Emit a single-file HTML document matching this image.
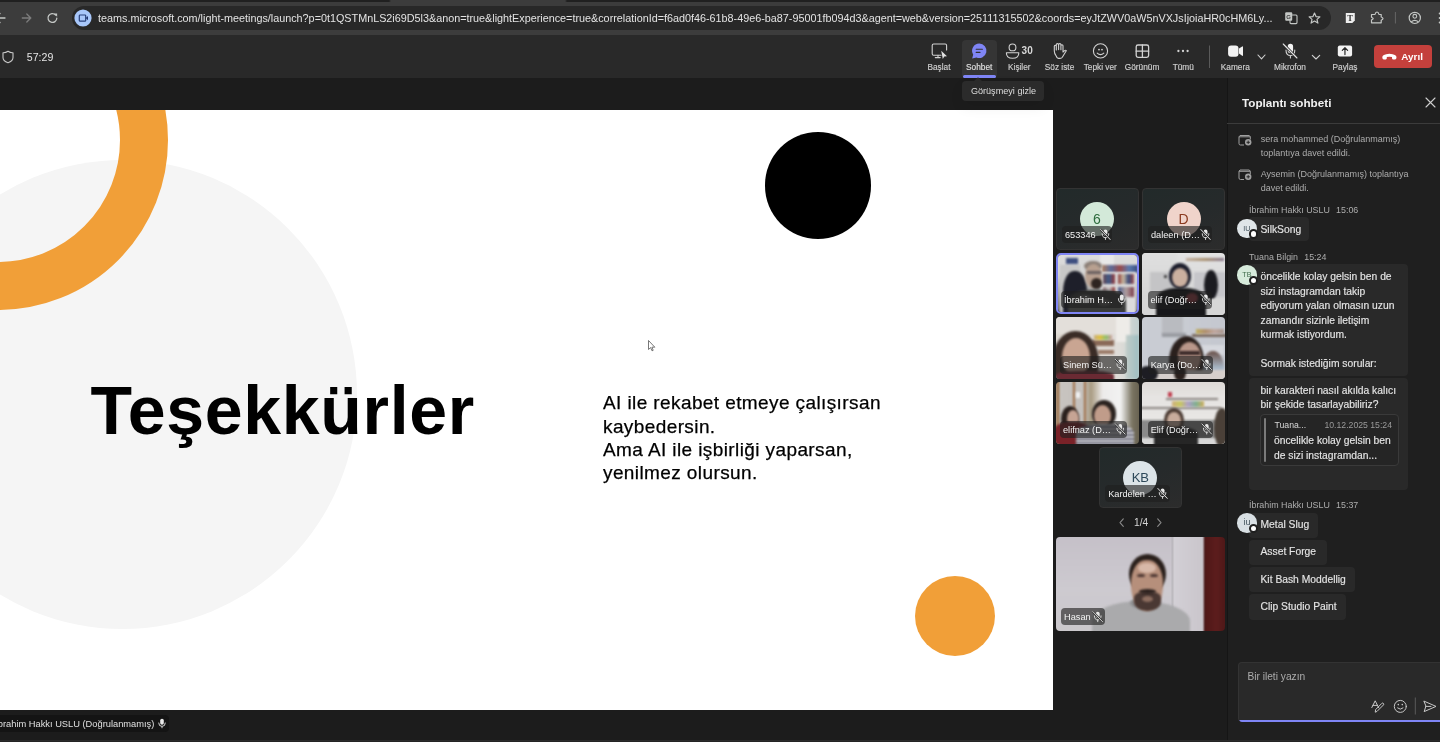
<!DOCTYPE html>
<html><head><meta charset="utf-8">
<style>
*{margin:0;padding:0;box-sizing:border-box}
html,body{width:1440px;height:742px;overflow:hidden;background:#1c1c1c;font-family:"Liberation Sans",sans-serif}
.a{position:absolute}
.t{position:absolute;white-space:nowrap;line-height:1}
svg{position:absolute;overflow:visible}
#tabstrip{left:0;top:0;width:1440px;height:2px;background:linear-gradient(90deg,#202020 0 389px,#3c3c3c 391px 565px,#202020 567px)}
#chrome{left:0;top:0;width:1440px;height:35px;background:#3c3c3c}
#omni{left:72px;top:6px;width:1259px;height:24px;border-radius:12px;background:#282828}
#theader{left:0;top:35px;width:1440px;height:43px;background:#292929}
#main{left:0;top:78px;width:1227px;height:664px;background:#1c1c1c}
#slide{left:0;top:110px;width:1053px;height:600px;background:#fff;overflow:hidden}
#chat{left:1227px;top:78px;width:213px;height:664px;background:#1f1f1f;border-left:1px solid #151515}
.lbl{color:#d0d0d0;font-size:8.3px;-webkit-text-stroke:0.15px #d0d0d0}
</style></head><body><div id="root" style="position:absolute;left:0;top:0;width:1440px;height:742px;will-change:transform">
<!-- BROWSER CHROME -->
<div id="chrome" class="a"></div>
<div id="tabstrip" class="a"></div>
<div id="omni" class="a"></div>
<!-- chrome icons -->
<svg style="left:0;top:0" width="1440" height="36" viewBox="0 0 1440 36">
  <g fill="none" stroke="#c4c7c5" stroke-width="1.3" stroke-linecap="round" stroke-linejoin="round">
    <path d="M5 18 H-4 M0 13.5 L-4.5 18 L0 22.5"/>
  </g>
  <g fill="none" stroke="#7c7c7c" stroke-width="1.3" stroke-linecap="round" stroke-linejoin="round">
    <path d="M22.3 18 H30.6 M26.8 14 L30.8 18 L26.8 22"/>
  </g>
  <g fill="none" stroke="#c4c7c5" stroke-width="1.3" stroke-linecap="round">
    <path d="M56.8 18.2 A4.4 4.4 0 1 1 55.6 15"/>
  </g>
  <path d="M54 13.6 L57.1 13.6 L57.1 16.7 Z" fill="#c4c7c5"/>
  <circle cx="83" cy="18" r="8.6" fill="#a8c7fa"/>
  <rect x="79.3" y="15" width="6.4" height="6.2" rx="0.8" fill="none" stroke="#27407a" stroke-width="1.2"/>
  <path d="M85.8 18.1 L88 16 V20.2 Z" fill="#1f3570"/>
  <!-- translate -->
  <rect x="1285.2" y="12.2" width="7" height="8.6" rx="1" fill="#c4c7c5"/>
  <rect x="1290" y="15" width="7" height="8.6" rx="1" fill="none" stroke="#c4c7c5" stroke-width="1.1"/>
  <text x="1286.3" y="19.3" font-size="6" font-family="Liberation Sans" font-weight="bold" fill="#3c3c3c">G</text>
  <!-- star -->
  <path d="M1314.5 13 L1316 16.6 L1319.9 16.9 L1317 19.4 L1317.9 23.1 L1314.5 21.1 L1311.1 23.1 L1312 19.4 L1309.1 16.9 L1313 16.6 Z" fill="none" stroke="#c4c7c5" stroke-width="1.2" stroke-linejoin="round"/>
  <!-- T ext -->
  <path d="M1345.8 13 H1354.8 V20.5 L1352.3 23 H1345.8 Z" fill="#ededed"/>
  <text x="1347.3" y="21.2" font-size="8.5" font-family="Liberation Serif" font-weight="bold" fill="#333">T</text>
  <!-- puzzle -->
  <path d="M1371.5 14.5 H1375 Q1375.5 12 1377 12 Q1378.5 12 1379 14.5 H1381.2 V17 Q1383 17.6 1383 18.6 Q1383 19.6 1381.2 20.2 V22.8 H1371.5 V20 Q1373.2 19.2 1373.2 18.6 Q1373.2 18 1371.5 17.2 Z" fill="none" stroke="#c4c7c5" stroke-width="1.2" stroke-linejoin="round"/>
  <line x1="1395.4" y1="12" x2="1395.4" y2="23.5" stroke="#666" stroke-width="1"/>
  <!-- profile -->
  <circle cx="1414.8" cy="17.9" r="5.6" fill="none" stroke="#c4c7c5" stroke-width="1.2"/>
  <circle cx="1414.8" cy="16.3" r="1.9" fill="none" stroke="#c4c7c5" stroke-width="1.1"/>
  <path d="M1411.3 21.8 Q1414.8 19 1418.3 21.8" fill="none" stroke="#c4c7c5" stroke-width="1.1"/>
  <circle cx="1439.6" cy="13.5" r="0.9" fill="#c4c7c5"/><circle cx="1439.6" cy="18" r="0.9" fill="#c4c7c5"/><circle cx="1439.6" cy="22.5" r="0.9" fill="#c4c7c5"/>
</svg>

<div class="t" style="left:98px;top:12.9px;font-size:10.8px;color:#e3e3e3">teams.microsoft.com/light-meetings/launch?p=0t1QSTMnLS2i69D5l3&amp;anon=true&amp;lightExperience=true&amp;correlationId=f6ad0f46-61b8-49e6-ba87-95001fb094d3&amp;agent=web&amp;version=25111315502&amp;coords=eyJtZWV0aW5nVXJsIjoiaHR0cHM6Ly...</div>

<!-- TEAMS HEADER -->
<div id="theader" class="a"></div>
<!-- teams header -->
<svg style="left:0;top:35px" width="1440" height="43" viewBox="0 35 1440 43">
  <path d="M8 51.3 Q10.5 53 13 52.8 V57.5 Q13 61 8 62.8 Q3 61 3 57.5 V52.8 Q5.5 53 8 51.3 Z" fill="none" stroke="#c8c8c8" stroke-width="1.1" stroke-linejoin="round"/>
</svg>
<div class="t" style="left:26.8px;top:51.7px;font-size:10.6px;color:#e6e6e6">57:29</div>
<div class="a" style="left:962px;top:39.6px;width:34.6px;height:36px;border-radius:4px 4px 0 0;background:#353535"></div>
<div class="a" style="left:963px;top:75px;width:33px;height:2.5px;border-radius:1.5px;background:#7f85f5"></div>
<svg style="left:0;top:35px" width="1440" height="43" viewBox="0 35 1440 43">
  <g fill="none" stroke="#d2d2d2" stroke-width="1.1" stroke-linecap="round" stroke-linejoin="round">
    <!-- monitor -->
    <path d="M941 55.2 H933.6 Q932.2 55.2 932.2 53.8 V45.4 Q932.2 44 933.6 44 H945.2 Q946.6 44 946.6 45.4 V50"/>
    <path d="M938 55.4 V57.3 M935.3 57.6 H940.2"/>
    <!-- person -->
    <circle cx="1012.5" cy="47.4" r="3.4"/>
    <path d="M1006.4 52.7 H1018.8 Q1019 58.3 1012.6 58.3 Q1006.2 58.3 1006.4 52.7 Z"/>
    <!-- hand -->
    <path d="M1056.2 56 Q1054.3 53.5 1054.3 51 V46.2 Q1054.3 45.2 1055.3 45.2 Q1056.3 45.2 1056.3 46.2 V50 M1056.3 50 V44.6 Q1056.3 43.6 1057.5 43.6 Q1058.6 43.6 1058.6 44.6 V49.6 M1058.6 44.6 Q1058.6 43.6 1059.8 43.6 Q1060.9 43.6 1060.9 44.6 V49.8 M1060.9 45.8 Q1060.9 44.8 1062 44.8 Q1063 44.8 1063 45.8 V52 L1064.6 50.6 Q1065.6 49.9 1066.3 50.7 L1062.3 57.2 Q1061.5 58.4 1060 58.4 H1058.3 Q1057 58.4 1056.2 56"/>
    <!-- smiley -->
    <circle cx="1100.5" cy="50.9" r="7.1"/>
    <path d="M1097.2 53.1 Q1100.5 56.2 1103.8 53.1"/>
    <!-- grid -->
    <rect x="1136.2" y="45" width="12.4" height="12.3" rx="1.8" stroke-width="1.3"/>
    <path d="M1142.4 45 V57.3 M1136.2 51.15 H1148.6" stroke-width="1.3"/>
    <!-- chevrons -->
    <path d="M1258 55 L1261.5 58.8 L1265 55 M1312.3 55.3 L1316 59 L1319.7 55.3"/>
    <!-- mic -->
    <path d="M1286 50 Q1286 55.5 1290.4 55.5 Q1294.8 55.5 1294.8 50 M1290.4 55.5 V58"/>
    <path d="M1283.2 44 L1297 58" stroke="#d2d2d2" stroke-width="1.1"/>
  </g>
  <g fill="#d2d2d2">
    <circle cx="998.8" cy="51" r="0"/>
    <path d="M941.2 50.8 L947 56.2 L944.3 56.6 L942.8 59 Z" fill="#e0e0e0"/>
    <circle cx="1099" cy="49.6" r="0.9"/><circle cx="1102" cy="49.6" r="0.9"/>
    <circle cx="1178.4" cy="51" r="1.15"/><circle cx="1183" cy="51" r="1.15"/><circle cx="1187.6" cy="51" r="1.15"/>
  </g>
  <!-- chat bubble -->
  <path d="M979.3 43.6 A7.2 7.2 0 1 1 976.4 57.4 L972.2 58.6 L973.2 54.6 A7.2 7.2 0 0 1 979.3 43.6 Z" fill="#7f85f5"/>
  <path d="M976.2 49.3 H982.4 M976.2 52.4 H980" stroke="#303030" stroke-width="1.1" stroke-linecap="round"/>
  <line x1="1209.5" y1="45.5" x2="1209.5" y2="68" stroke="#5a5a5a" stroke-width="1"/>
  <!-- camera -->
  <rect x="1228.1" y="45.4" width="10.4" height="11.4" rx="3" fill="#f2f2f2"/>
  <path d="M1239 48.6 L1242.2 46.4 Q1243 46 1243 47 V55.2 Q1243 56.2 1242.2 55.8 L1239 53.6 Z" fill="#f2f2f2"/>
  <!-- mic body -->
  <rect x="1287.7" y="43.8" width="5.4" height="9.4" rx="2.7" fill="#f2f2f2"/>
  <path d="M1283.2 44 L1297 58" stroke="#292929" stroke-width="2.6"/>
  <path d="M1283.2 44 L1297 58" stroke="#e6e6e6" stroke-width="1.1"/>
  <!-- share -->
  <rect x="1337.8" y="45.4" width="14.3" height="11" rx="2" fill="#f2f2f2"/>
  <path d="M1344.95 54.6 V48 M1342.3 50.4 L1344.95 47.7 L1347.6 50.4" fill="none" stroke="#292929" stroke-width="1.2" stroke-linecap="round" stroke-linejoin="round"/>
</svg>
<div class="a" style="left:1373.8px;top:45.1px;width:58.2px;height:23.3px;border-radius:4px;background:#c4403c"></div>
<svg style="left:0;top:35px" width="1440" height="43" viewBox="0 35 1440 43">
  <path d="M1382.3 57.6 Q1382 54.2 1389.4 53.8 Q1396.8 54.2 1396.5 57.6 Q1396.4 59.6 1395 59.6 L1393 59.4 Q1392 59.2 1392 58.2 V57 Q1389.4 56.3 1386.8 57 V58.2 Q1386.8 59.2 1385.8 59.4 L1383.8 59.6 Q1382.4 59.6 1382.3 57.6 Z" fill="#fff"/>
</svg>
<div class="t" style="left:1401.3px;top:52px;font-size:9.9px;font-weight:bold;color:#fff">Ayrıl</div>
<div class="t" style="left:1021.6px;top:46.4px;font-size:10px;font-weight:bold;color:#d8d8d8">30</div>
<div class="t lbl" style="left:909px;width:60px;top:62.8px;text-align:center">Başlat</div>
<div class="t lbl" style="left:949.2px;width:60px;top:62.8px;text-align:center;color:#e8e8e8">Sohbet</div>
<div class="t lbl" style="left:989.3px;width:60px;top:62.8px;text-align:center">Kişiler</div>
<div class="t lbl" style="left:1029.5px;width:60px;top:62.8px;text-align:center">Söz iste</div>
<div class="t lbl" style="left:1070.3px;width:60px;top:62.8px;text-align:center">Tepki ver</div>
<div class="t lbl" style="left:1112px;width:60px;top:62.8px;text-align:center">Görünüm</div>
<div class="t lbl" style="left:1153.3px;width:60px;top:62.8px;text-align:center">Tümü</div>
<div class="t lbl" style="left:1205.3px;width:60px;top:62.8px;text-align:center">Kamera</div>
<div class="t lbl" style="left:1260px;width:60px;top:62.8px;text-align:center">Mikrofon</div>
<div class="t lbl" style="left:1315px;width:60px;top:62.8px;text-align:center">Paylaş</div>
<!-- tooltip -->
<div class="a" style="left:962px;top:81px;width:82px;height:20px;border-radius:4px;background:#2b2b2b;box-shadow:0 6px 14px rgba(0,0,0,0.07);z-index:5"></div>
<svg style="left:972px;top:77px;z-index:5" width="14" height="5" viewBox="0 0 14 5"><path d="M1 5 L6 0.3 L11 5 Z" fill="#2b2b2b"/></svg>
<div class="t" style="left:970.9px;top:86.5px;font-size:9.1px;color:#dedede;z-index:6">Görüşmeyi gizle</div>



<!-- SLIDE -->
<div id="slide" class="a">
  <div class="a" style="left:-112px;top:50px;width:469px;height:469px;border-radius:50%;background:#f5f5f5"></div>
  <div class="a" style="left:-172px;top:-140px;width:340px;height:340px;border-radius:50%;border:48px solid #f19f38"></div>
  <div class="a" style="left:764.9px;top:22.3px;width:106.5px;height:106.5px;border-radius:50%;background:#000"></div>
  <div class="a" style="left:915px;top:466px;width:80px;height:80px;border-radius:50%;background:#f19f38"></div>
  <div class="t" style="left:90.5px;top:265.5px;font-size:68px;font-weight:bold;color:#000;letter-spacing:0.7px">Teşekkürler</div>
  <div class="a" style="left:603px;top:281.3px;font-size:19px;line-height:23.2px;color:#000;letter-spacing:0.4px;-webkit-text-stroke:0.25px #000;white-space:nowrap">AI ile rekabet etmeye çalışırsan<br>kaybedersin.<br>Ama AI ile işbirliği yaparsan,<br>yenilmez olursun.</div>
</div>
<!--SLIDEEXTRA-->

<!-- TILES -->
<style>
.tile{position:absolute;width:83px;height:62px;border-radius:4px;overflow:hidden}
.av{background:linear-gradient(160deg,#222a2a 0%,#262a2b 50%,#2c2c2c 100%);border:1px solid #333}
.b{position:absolute;border-radius:50%}
.tl{position:absolute;height:17.5px;border-radius:4px;background:rgba(30,30,30,0.62);color:#f0f0f0;font-size:9.2px;line-height:17.5px;padding-left:3px;padding-top:1.2px;white-space:nowrap;color:#f4f4f4}
.mic{position:absolute}
.ph>div{filter:blur(1.2px)}
.circ{position:absolute;border-radius:50%;text-align:center;font-family:"Liberation Sans",sans-serif}
</style>
<!-- row 1 -->
<div class="tile av" style="left:1056px;top:188px"></div>
<div class="circ" style="left:1080px;top:201.7px;width:34px;height:34px;background:#d3e9d9;color:#2d6b3d;font-size:14px;line-height:34px">6</div>
<div class="tl" style="left:1062px;top:225.8px;width:50.4px">653346</div>
<div class="tile av" style="left:1142px;top:188px"></div>
<div class="circ" style="left:1166.6px;top:201.7px;width:34px;height:34px;background:#f0d4cb;color:#8b3a1f;font-size:14px;line-height:34px">D</div>
<div class="tl" style="left:1148px;top:225.8px;width:64px">daleen (D…</div>

<!-- row 2: ibrahim -->
<div class="tile ph" style="left:1055.7px;top:252.7px;width:83.2px;height:61.5px;border:2.6px solid #7f85f5;border-radius:5px">
  <div class="a" style="left:-3px;top:-3px;width:86px;height:66px;background:linear-gradient(180deg,#dedede 0%,#d4d4d4 35%,#a0a0a0 65%,#5a5a5a 100%)"></div>
  <div class="a" style="left:42px;top:-3px;width:14px;height:20px;background:#e8e8e8"></div>
  <div class="a" style="left:2px;top:10px;width:20px;height:50px;background:#c8c8c8"></div>
  <div class="a" style="left:8px;top:3px;width:12px;height:6px;background:#3e4f80"></div>
  <div class="a" style="left:44px;top:10px;width:36px;height:8px;background:linear-gradient(90deg,#b08060,#5a6a9a,#9a4a4a,#5a7ab0,#3a4a7a)"></div>
  <div class="a" style="left:42px;top:17px;width:36px;height:42px;background:#dcdcdc"></div>
  <div class="a" style="left:45px;top:19px;width:12px;height:10px;background:linear-gradient(90deg,#6a4a55,#3b5a88,#9b3a3a)"></div>
  <div class="a" style="left:60px;top:19px;width:16px;height:10px;background:linear-gradient(90deg,#8a3a3a,#c9b8a0,#3a4a7a,#a05050)"></div>
  <div class="a" style="left:45px;top:32px;width:12px;height:10px;background:linear-gradient(90deg,#8a6a70,#c9c9c9,#8a2a2a)"></div>
  <div class="a" style="left:60px;top:32px;width:16px;height:10px;background:linear-gradient(90deg,#4a5a8a,#b0a0a0,#7a3a4a)"></div>
  <div class="b" style="left:5px;top:16px;width:24px;height:46px;background:#1e1f2a;border-radius:45% 45% 10% 10%"></div>
  <div class="b" style="left:26px;top:6px;width:18px;height:10px;background:#8c8078"></div>
  <div class="b" style="left:27px;top:9px;width:17px;height:24px;background:#b8a090"></div>
  <div class="a" style="left:29px;top:16px;width:14px;height:3px;background:#6a6060"></div>
  <div class="b" style="left:33px;top:23px;width:11px;height:11px;background:#2e2420"></div>
  <div class="a" style="left:10px;top:35px;width:58px;height:28px;background:#3a3b3a;border-radius:40% 40% 0 0"></div>
  <div class="b" style="left:20px;top:40px;width:14px;height:8px;background:#6a6a68"></div>
  <div class="b" style="left:40px;top:44px;width:12px;height:7px;background:#5a5a58"></div>
</div>
<div class="tl" style="left:1061px;top:290.5px;width:62px">İbrahim H…</div>

<!-- elif -->
<div class="tile ph" style="left:1142px;top:253px">
  <div class="a" style="left:-3px;top:-3px;width:90px;height:70px;background:linear-gradient(180deg,#e4e4e4 0%,#dadada 45%,#d2d2d2 100%)"></div>
  <div class="a" style="left:-3px;top:-3px;width:38px;height:70px;background:linear-gradient(180deg,#e0e0e0,#d0d0d0)"></div>
  <div class="a" style="left:44px;top:5px;width:38px;height:3px;background:linear-gradient(90deg,#c2b0a0,#a89070,#8a7a90)"></div>
  <div class="a" style="left:8px;top:19px;width:22px;height:20px;background:#c4c4c6"></div>
  <div class="b" style="left:22px;top:22px;width:3px;height:3px;background:#222"></div>
  <div class="a" style="left:52px;top:19px;width:32px;height:25px;background:#c6c6ca"></div>
  <div class="b" style="left:62px;top:17px;width:14px;height:30px;background:#1b1b20"></div>
  <div class="a" style="left:-3px;top:46px;width:90px;height:20px;background:#d6d6d6"></div>
  <div class="b" style="left:27px;top:10px;width:22px;height:26px;background:#1c1d2c"></div>
  <div class="b" style="left:30px;top:15px;width:16px;height:19px;background:#cbb0a0"></div>
  <div class="a" style="left:14px;top:35px;width:50px;height:30px;background:#17171a;border-radius:40% 40% 0 0"></div>
  <div class="b" style="left:44px;top:40px;width:12px;height:10px;background:#8a3a40"></div>
</div>
<div class="tl" style="left:1147.5px;top:291px;width:64px">elif (Doğr…</div>

<!-- sinem -->
<div class="tile ph" style="left:1055.6px;top:317.2px">
  <div class="a" style="left:-3px;top:-3px;width:90px;height:70px;background:linear-gradient(90deg,#dcd6cf 0%,#e2ddd7 55%,#dedcd8 75%,#b9cbcc 100%)"></div>
  <div class="a" style="left:-3px;top:-3px;width:70px;height:20px;background:#e3dfda"></div>
  <div class="a" style="left:60px;top:-3px;width:14px;height:28px;background:#eeece8"></div>
  <div class="a" style="left:36px;top:23px;width:22px;height:6px;background:#8a6a58"></div>
  <div class="a" style="left:38px;top:18px;width:18px;height:5px;background:linear-gradient(90deg,#c8b080,#e0c040,#90c070,#d0a0a0)"></div>
  <div class="a" style="left:42px;top:33px;width:16px;height:4px;background:#9a7a68"></div>
  <div class="a" style="left:70px;top:18px;width:13px;height:44px;background:linear-gradient(90deg,#c0ccc8,#9fbfc2)"></div>
  <div class="b" style="left:-4px;top:14px;width:47px;height:62px;background:#3a2c26"></div>
  <div class="b" style="left:6px;top:21px;width:28px;height:38px;background:#c9a592"></div>
  <div class="a" style="left:0;top:54px;width:58px;height:10px;background:#6a2a33;border-radius:40% 40% 0 0"></div>
</div>
<div class="tl" style="left:1060px;top:356px;width:67px">Sinem Sü…</div>

<!-- karya -->
<div class="tile ph" style="left:1142.3px;top:317.2px">
  <div class="a" style="left:-3px;top:-3px;width:90px;height:70px;background:linear-gradient(90deg,#cacdd4 0%,#c9ccd3 40%,#c4c7cf 100%)"></div>
  <div class="a" style="left:20px;top:-3px;width:21px;height:21px;background:#b9bbc0"></div>
  <div class="a" style="left:20px;top:16px;width:24px;height:4px;background:#9a9ca2"></div>
  <div class="a" style="left:50px;top:17px;width:35px;height:3px;background:#7a6a60"></div>
  <div class="a" style="left:54px;top:12px;width:28px;height:5px;background:linear-gradient(90deg,#c0b060,#b09070,#c0a8a0,#a89890)"></div>
  <div class="a" style="left:52px;top:28px;width:30px;height:10px;background:#d6d8de"></div>
  <div class="b" style="left:60px;top:34px;width:22px;height:34px;background:linear-gradient(180deg,#6a5048,#a8b8c8 50%,#d0d0d8)"></div>
  <div class="b" style="left:27px;top:19px;width:35px;height:50px;background:#2a201d"></div>
  <div class="b" style="left:36px;top:25px;width:23px;height:31px;background:#b9978a"></div>
  <div class="a" style="left:37px;top:34px;width:21px;height:4px;background:#3a2a28"></div>
  <div class="a" style="left:10px;top:53px;width:75px;height:12px;background:#d6cfcc"></div>
  <div class="b" style="left:32px;top:48px;width:12px;height:16px;background:#2a201d"></div>
  <div class="b" style="left:-4px;top:49px;width:20px;height:16px;background:#1d1d23"></div>
</div>
<div class="tl" style="left:1147.7px;top:356px;width:65.3px">Karya (Do…</div>

<!-- elifnaz -->
<div class="tile ph" style="left:1055.6px;top:382.2px">
  <div class="a" style="left:-3px;top:-3px;width:90px;height:70px;background:linear-gradient(90deg,#9a7a5a 0%,#c8c4c0 8%,#c4c0bc 35%,#a89a80 42%,#ecebea 55%,#f2f2f2 75%,#7a7462 88%,#5e5848 100%)"></div>
  <div class="a" style="left:1px;top:-3px;width:2.5px;height:70px;background:#9a6a40"></div>
  <div class="a" style="left:17px;top:-3px;width:2.5px;height:45px;background:#a07048"></div>
  <div class="a" style="left:28px;top:-3px;width:2.5px;height:45px;background:#a07048"></div>
  <div class="a" style="left:20px;top:10px;width:4px;height:6px;background:#f2f2f2"></div>
  <div class="b" style="left:5px;top:24px;width:18px;height:26px;background:#2a201d"></div>
  <div class="b" style="left:11px;top:28px;width:12px;height:17px;background:#c6a494"></div>
  <div class="a" style="left:-3px;top:40px;width:38px;height:25px;background:#7a2228;border-radius:40% 40% 0 0"></div>
  <div class="b" style="left:36px;top:18px;width:24px;height:28px;background:#2a221f"></div>
  <div class="b" style="left:38px;top:23px;width:17px;height:22px;background:#c09c8a"></div>
  <div class="a" style="left:20px;top:42px;width:58px;height:22px;background:repeating-linear-gradient(180deg,#d4d4da 0 2px,#6a6a78 2px 4px);border-radius:40% 40% 0 0"></div>
</div>
<div class="tl" style="left:1060px;top:420.5px;width:67px">elifnaz (D…</div>

<!-- Elif -->
<div class="tile ph" style="left:1142.3px;top:382.2px">
  <div class="a" style="left:-3px;top:-3px;width:90px;height:70px;background:linear-gradient(180deg,#dcd8d4 0%,#e6e4e2 25%,#e8e6e4 55%,#c8c6c4 100%)"></div>
  <div class="a" style="left:24px;top:16px;width:52px;height:2px;background:#8a8480"></div>
  <div class="a" style="left:-3px;top:25px;width:82px;height:2px;background:#8a8480"></div>
  <div class="a" style="left:30px;top:19px;width:32px;height:6px;background:linear-gradient(90deg,#d0b080,#c8c860,#b0a0c8,#80b090,#d0b060)"></div>
  <div class="a" style="left:26px;top:10px;width:4px;height:5px;background:#c04050"></div>
  <div class="a" style="left:-3px;top:38px;width:90px;height:20px;background:#8a8a8a"></div>
  <div class="a" style="left:-3px;top:56px;width:90px;height:10px;background:#d8d8d8"></div>
  <div class="b" style="left:22px;top:26px;width:20px;height:24px;background:#4a3a32"></div>
  <div class="b" style="left:25px;top:30px;width:14px;height:17px;background:#c8ac9c"></div>
  <div class="a" style="left:12px;top:45px;width:44px;height:20px;background:#262626;border-radius:40% 40% 0 0"></div>
  <div class="b" style="left:72px;top:26px;width:16px;height:40px;background:#4a4038"></div>
</div>
<div class="tl" style="left:1147.7px;top:420.5px;width:65.3px">Elif (Doğr…</div>

<!-- KB -->
<div class="tile av" style="left:1099px;top:447px;width:82.5px;height:61px"></div>
<div class="circ" style="left:1123.3px;top:460.7px;width:34px;height:34px;background:#dce4e8;color:#2d4859;font-size:13px;line-height:34px">KB</div>
<div class="tl" style="left:1105.2px;top:484.5px;width:64.8px">Kardelen …</div>

<!-- pagination -->
<svg style="left:0;top:0" width="1440" height="742"><path d="M1123.3 518.8 L1120 522.6 L1123.3 526.4 M1157.7 518.8 L1161 522.6 L1157.7 526.4" fill="none" stroke="#8a8a8a" stroke-width="1.1" stroke-linecap="round" stroke-linejoin="round"/></svg>
<div class="t" style="left:1134px;top:518px;font-size:10.2px;color:#d6d6d6">1/4</div>

<!-- hasan -->
<div class="tile ph" style="left:1055.5px;top:537.3px;width:169.6px;height:94.2px">
  <div class="a" style="left:-3px;top:-3px;width:120px;height:100px;background:linear-gradient(180deg,#c5c0c8 0%,#cdcad0 55%,#cbc8cc 100%)"></div>
  <div class="a" style="left:116px;top:-3px;width:33px;height:100px;background:linear-gradient(90deg,#d3d0d6,#c9c5cb)"></div>
  <div class="a" style="left:148.5px;top:-3px;width:25px;height:100px;background:linear-gradient(90deg,#4e1616,#5c1d1d 50%,#481515)"></div>
  <div class="a" style="left:36px;top:64px;width:98px;height:34px;background:#aaaaac;border-radius:50% 50% 0 0/60% 60% 0 0"></div>
  <div class="b" style="left:74px;top:60px;width:30px;height:12px;background:#8f8f91"></div>
  <div class="b" style="left:73px;top:17px;width:37px;height:40px;background:#2a201c"></div>
  <div class="b" style="left:75.5px;top:23px;width:32px;height:51px;background:#b68f7b;border-radius:45% 45% 50% 50%"></div>
  <div class="b" style="left:82px;top:26px;width:18px;height:10px;background:#d7b8a8"></div>
  <div class="b" style="left:78px;top:55px;width:27px;height:19px;background:#4a3833;border-radius:30% 30% 50% 50%"></div>
  <div class="b" style="left:83px;top:52px;width:17px;height:5px;background:#2e2320"></div>
  <div class="b" style="left:86px;top:59px;width:11px;height:6px;background:#8e6e60"></div>
  <div class="b" style="left:81px;top:37px;width:8px;height:3px;background:#4a3530"></div>
  <div class="b" style="left:94px;top:37px;width:8px;height:3px;background:#4a3530"></div>
</div>
<div class="tl" style="left:1061.1px;top:607.7px;width:43.5px">Hasan</div>
<svg style="left:0;top:0" width="1440" height="742"><rect x="1103.55" y="229.50" width="3.8" height="6.2" rx="1.9" fill="#e8e8e8"/><path d="M1102.15 233.70 Q1102.15 237.70 1105.45 237.70 Q1108.75 237.70 1108.75 233.70 M1105.45 237.70 V239.50" fill="none" stroke="#e8e8e8" stroke-width="0.9" stroke-linecap="round"/><path d="M1100.70 229.50 L1110.20 239.50" stroke="#333" stroke-width="2"/><path d="M1100.70 229.50 L1110.20 239.50" stroke="#e8e8e8" stroke-width="0.9" stroke-linecap="round"/><rect x="1203.65" y="229.50" width="3.8" height="6.2" rx="1.9" fill="#e8e8e8"/><path d="M1202.25 233.70 Q1202.25 237.70 1205.55 237.70 Q1208.85 237.70 1208.85 233.70 M1205.55 237.70 V239.50" fill="none" stroke="#e8e8e8" stroke-width="0.9" stroke-linecap="round"/><path d="M1200.80 229.50 L1210.30 239.50" stroke="#333" stroke-width="2"/><path d="M1200.80 229.50 L1210.30 239.50" stroke="#e8e8e8" stroke-width="0.9" stroke-linecap="round"/><rect x="1119.85" y="294.50" width="3.8" height="6.2" rx="1.9" fill="#e8e8e8"/><path d="M1118.45 298.70 Q1118.45 302.70 1121.75 302.70 Q1125.05 302.70 1125.05 298.70 M1121.75 302.70 V304.50" fill="none" stroke="#e8e8e8" stroke-width="0.9" stroke-linecap="round"/><rect x="1203.85" y="294.50" width="3.8" height="6.2" rx="1.9" fill="#e8e8e8"/><path d="M1202.45 298.70 Q1202.45 302.70 1205.75 302.70 Q1209.05 302.70 1209.05 298.70 M1205.75 302.70 V304.50" fill="none" stroke="#e8e8e8" stroke-width="0.9" stroke-linecap="round"/><path d="M1201.00 294.50 L1210.50 304.50" stroke="#333" stroke-width="2"/><path d="M1201.00 294.50 L1210.50 304.50" stroke="#e8e8e8" stroke-width="0.9" stroke-linecap="round"/><rect x="1118.35" y="359.50" width="3.8" height="6.2" rx="1.9" fill="#e8e8e8"/><path d="M1116.95 363.70 Q1116.95 367.70 1120.25 367.70 Q1123.55 367.70 1123.55 363.70 M1120.25 367.70 V369.50" fill="none" stroke="#e8e8e8" stroke-width="0.9" stroke-linecap="round"/><path d="M1115.50 359.50 L1125.00 369.50" stroke="#333" stroke-width="2"/><path d="M1115.50 359.50 L1125.00 369.50" stroke="#e8e8e8" stroke-width="0.9" stroke-linecap="round"/><rect x="1204.85" y="359.50" width="3.8" height="6.2" rx="1.9" fill="#e8e8e8"/><path d="M1203.45 363.70 Q1203.45 367.70 1206.75 367.70 Q1210.05 367.70 1210.05 363.70 M1206.75 367.70 V369.50" fill="none" stroke="#e8e8e8" stroke-width="0.9" stroke-linecap="round"/><path d="M1202.00 359.50 L1211.50 369.50" stroke="#333" stroke-width="2"/><path d="M1202.00 359.50 L1211.50 369.50" stroke="#e8e8e8" stroke-width="0.9" stroke-linecap="round"/><rect x="1118.35" y="424.00" width="3.8" height="6.2" rx="1.9" fill="#e8e8e8"/><path d="M1116.95 428.20 Q1116.95 432.20 1120.25 432.20 Q1123.55 432.20 1123.55 428.20 M1120.25 432.20 V434.00" fill="none" stroke="#e8e8e8" stroke-width="0.9" stroke-linecap="round"/><path d="M1115.50 424.00 L1125.00 434.00" stroke="#333" stroke-width="2"/><path d="M1115.50 424.00 L1125.00 434.00" stroke="#e8e8e8" stroke-width="0.9" stroke-linecap="round"/><rect x="1204.85" y="424.00" width="3.8" height="6.2" rx="1.9" fill="#e8e8e8"/><path d="M1203.45 428.20 Q1203.45 432.20 1206.75 432.20 Q1210.05 432.20 1210.05 428.20 M1206.75 432.20 V434.00" fill="none" stroke="#e8e8e8" stroke-width="0.9" stroke-linecap="round"/><path d="M1202.00 424.00 L1211.50 434.00" stroke="#333" stroke-width="2"/><path d="M1202.00 424.00 L1211.50 434.00" stroke="#e8e8e8" stroke-width="0.9" stroke-linecap="round"/><rect x="1160.65" y="488.40" width="3.8" height="6.2" rx="1.9" fill="#e8e8e8"/><path d="M1159.25 492.60 Q1159.25 496.60 1162.55 496.60 Q1165.85 496.60 1165.85 492.60 M1162.55 496.60 V498.40" fill="none" stroke="#e8e8e8" stroke-width="0.9" stroke-linecap="round"/><path d="M1157.80 488.40 L1167.30 498.40" stroke="#333" stroke-width="2"/><path d="M1157.80 488.40 L1167.30 498.40" stroke="#e8e8e8" stroke-width="0.9" stroke-linecap="round"/><rect x="1095.85" y="611.70" width="3.8" height="6.2" rx="1.9" fill="#e8e8e8"/><path d="M1094.45 615.90 Q1094.45 619.90 1097.75 619.90 Q1101.05 619.90 1101.05 615.90 M1097.75 619.90 V621.70" fill="none" stroke="#e8e8e8" stroke-width="0.9" stroke-linecap="round"/><path d="M1093.00 611.70 L1102.50 621.70" stroke="#333" stroke-width="2"/><path d="M1093.00 611.70 L1102.50 621.70" stroke="#e8e8e8" stroke-width="0.9" stroke-linecap="round"/></svg>
<div class="a" style="left:-10px;top:715px;width:178.8px;height:17px;border-radius:4px;background:#141414"></div>
<div class="t" style="left:-4.8px;top:720.4px;font-size:9.3px;color:#e0e0e0">İbrahim Hakkı USLU (Doğrulanmamış)</div>
<svg style="left:0;top:0" width="1440" height="742"><rect x="160.2" y="718.8" width="3.6" height="6" rx="1.8" fill="#e8e8e8"/><path d="M158.7 722.6 Q158.7 726.4 162 726.4 Q165.3 726.4 165.3 722.6 M162 726.4 V728.2" fill="none" stroke="#e8e8e8" stroke-width="0.9"/></svg>

<svg style="left:0;top:0" width="1440" height="742"><path d="M648.5 340.5 V349.5 L650.6 347.6 L652 350.8 L653.2 350.3 L651.9 347.2 L654.8 347.2 Z" fill="#fff" stroke="#555" stroke-width="0.8" stroke-linejoin="round"/></svg>


<!-- CHAT -->
<div id="chat" class="a"></div>
<style>
.sys{position:absolute;left:1260.7px;font-size:9px;line-height:14.2px;color:#adadad;white-space:nowrap}
.who{position:absolute;left:1249px;font-size:8.9px;line-height:1;color:#adadad;white-space:nowrap}
.bub{position:absolute;left:1249px;background:#292929;border-radius:4px}
.msg{position:absolute;left:1260.5px;font-size:10.3px;color:#e4e4e4;white-space:nowrap;line-height:1;-webkit-text-stroke:0.15px #e4e4e4}
.avt{position:absolute;width:19.5px;height:19.5px;border-radius:50%;text-align:center;font-size:7.2px;line-height:19.5px}
.dot{position:absolute;width:9.4px;height:9.4px;border-radius:50%;background:#fff;border:2px solid #1f1f1f}
</style>
<div class="t" style="left:1242px;top:97.4px;font-size:11.7px;font-weight:bold;color:#f2f2f2">Toplantı sohbeti</div>
<svg style="left:0;top:0" width="1440" height="742"><path d="M1426 98 L1435 107 M1435 98 L1426 107" stroke="#cfcfcf" stroke-width="1.1" stroke-linecap="round"/></svg>
<div class="a" style="left:1227px;top:123px;width:213px;height:1px;background:#3b3b3b"></div>
<svg style="left:0;top:0" width="1440" height="742">
 <g fill="none" stroke="#a0a0a0" stroke-width="1">
  <path d="M1244 145 H1240.5 Q1239 145 1239 143.5 V136.8 H1250.3 V139.5 M1239 136.8 L1240 135.5 H1249.3 L1250.3 136.8"/>
  <path d="M1244 179.5 H1240.5 Q1239 179.5 1239 178 V171.3 H1250.3 V174 M1239 171.3 L1240 170 H1249.3 L1250.3 171.3"/>
 </g>
 <g fill="#a0a0a0"><circle cx="1248.2" cy="142.3" r="3.2"/><circle cx="1248.2" cy="176.8" r="3.2"/></g>
 <g stroke="#1f1f1f" stroke-width="0.9"><path d="M1246.5 142.3 H1249.9 M1248.2 140.6 V144"/><path d="M1246.5 176.8 H1249.9 M1248.2 175.1 V178.5"/></g>
</svg>
<div class="sys" style="top:131.8px">sera mohammed (Doğrulanmamış)<br>toplantıya davet edildi.</div>
<div class="sys" style="top:166.5px">Aysemin (Doğrulanmamış) toplantıya<br>davet edildi.</div>

<div class="who" style="top:205.6px">İbrahim Hakkı USLU<span style="margin-left:6.2px"></span>15:06</div>
<div class="bub" style="top:217px;width:59.7px;height:24.4px"></div>
<div class="msg" style="top:224.6px">SilkSong</div>
<div class="avt" style="left:1237px;top:218.7px;background:#dfe5e8;color:#42525c">IU</div>
<div class="dot" style="left:1248.8px;top:229.4px"></div>

<div class="who" style="top:253px">Tuana Bilgin<span style="margin-left:6.2px"></span>15:24</div>
<div class="bub" style="top:264px;width:159px;height:111.7px"></div>
<div class="msg" style="top:272.3px;line-height:14.5px;margin-top:-2.3px">öncelikle kolay gelsin ben de<br>sizi instagramdan takip<br>ediyorum yalan olmasın uzun<br>zamandır sizinle iletişim<br>kurmak istiyordum.<br><br>Sormak istediğim sorular:</div>
<div class="avt" style="left:1237.2px;top:265.2px;background:#d6eadb;color:#3f6b4b">TB</div>
<div class="dot" style="left:1248.8px;top:276px"></div>

<div class="bub" style="top:378px;width:159px;height:112px"></div>
<div class="msg" style="top:383.5px;line-height:14.5px">bir karakteri nasıl akılda kalıcı<br>bir şekide tasarlayabiliriz?</div>
<div class="a" style="left:1260.4px;top:414.4px;width:138.5px;height:51.2px;border:1px solid #3a3a3a;border-radius:4px;background:#252525"></div>
<div class="a" style="left:1263.6px;top:418px;width:2.2px;height:44px;background:#7a7a7a;border-radius:1px"></div>
<div class="t" style="left:1274.5px;top:421.4px;font-size:8.7px;color:#d8d8d8">Tuana...</div>
<div class="t" style="left:1324.4px;top:421.4px;font-size:8.7px;color:#9a9a9a">10.12.2025 15:24</div>
<div class="msg" style="left:1274px;top:433px;line-height:15px">öncelikle kolay gelsin ben<br>de sizi instagramdan...</div>

<div class="who" style="top:501.2px">İbrahim Hakkı USLU<span style="margin-left:6.2px"></span>15:37</div>
<div class="bub" style="top:512.8px;width:68.7px;height:24.8px"></div>
<div class="msg" style="top:520.3px">Metal Slug</div>
<div class="bub" style="top:539.6px;width:78px;height:25.1px"></div>
<div class="msg" style="top:547.3px">Asset Forge</div>
<div class="bub" style="top:566.8px;width:106px;height:25.2px"></div>
<div class="msg" style="top:574.5px">Kit Bash Moddellig</div>
<div class="bub" style="top:594px;width:96.6px;height:25.8px"></div>
<div class="msg" style="top:602px">Clip Studio Paint</div>
<div class="avt" style="left:1237.2px;top:513.2px;background:#d8dfe3;color:#42525c;font-size:9px">iu</div>
<div class="dot" style="left:1248.8px;top:524px"></div>

<!-- input -->
<div class="a" style="left:1237.6px;top:661.5px;width:215px;height:60.5px;background:#292929;border-radius:4px;border:1px solid #333;border-bottom:none;overflow:hidden"><div class="a" style="left:0;bottom:0;width:100%;height:2px;background:#7f85f5"></div></div>
<div class="t" style="left:1247.4px;top:672px;font-size:10.2px;color:#adadad">Bir ileti yazın</div>
<svg style="left:0;top:0" width="1440" height="742">
 <g fill="none" stroke="#c8c8c8" stroke-width="1" stroke-linecap="round" stroke-linejoin="round">
  <path d="M1371.8 707.6 L1375.2 700.8 L1378.6 707.6 M1372.9 705.4 H1377.5"/>
  <path d="M1375.3 711.8 L1375.6 709.6 L1381.8 703.4 Q1382.6 702.6 1383.4 703.4 Q1384.2 704.2 1383.4 705 L1377.2 711.2 Z"/>
  <circle cx="1400.3" cy="706.4" r="6"/>
  <path d="M1397.6 708 Q1400.3 710.5 1403 708"/>
  <path d="M1424.2 701.2 L1436 706.4 L1424.2 711.6 L1425.8 706.4 Z M1425.8 706.4 H1431"/>
 </g>
 <circle cx="1398.3" cy="704.6" r="0.8" fill="#c8c8c8"/><circle cx="1402.3" cy="704.6" r="0.8" fill="#c8c8c8"/>
 <line x1="1415.3" y1="697.5" x2="1415.3" y2="714.5" stroke="#5a5a5a" stroke-width="1"/>
</svg>


<div class="a" style="left:0;top:740px;width:1440px;height:2px;background:linear-gradient(#2b2b2b 0 1px,#252525 1px)"></div>
</div></body></html>
